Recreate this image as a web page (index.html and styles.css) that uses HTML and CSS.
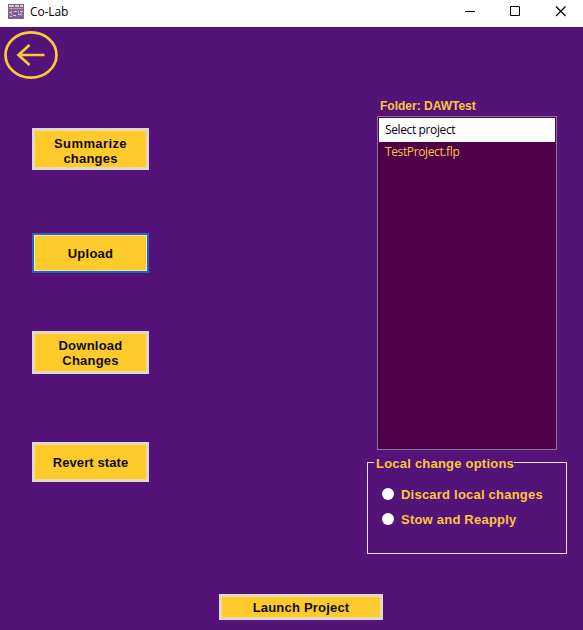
FILE: index.html
```html
<!DOCTYPE html>
<html lang="en">
<head>
<meta charset="utf-8">
<title>Co-Lab</title>
<link rel="stylesheet" href="styles.css">
</head>
<body>
<header class="titlebar">
  <svg class="app-icon" width="16" height="15" viewBox="0 0 16 15" shape-rendering="crispEdges">
    <path fill="#80639b" d="M0 0h16v15H0z"/>
    <path fill="#e6c9a8" d="M1 1h5v2H1zM7 1h4v2H7zM12 1h3v2h-3zM1 8h3v1H1zM6 7h3v1H6zM12 7h3v1h-3zM5 11h3v1H5zM10 10h3v1h-3zM2 12h2v1H2z"/>
    <path fill="#b79aac" d="M1 4h14v1H1zM3 6h1v5H3zM10 6h1v4h-1zM13 8h1v4h-1z"/>
    <path fill="#64468a" d="M1 6h1v1H1zM7 9h2v1H7zM12 13h2v1h-2z"/>
  </svg>
  <span class="app-name">Co-Lab</span>
  <svg class="controls" width="103" height="12" viewBox="0 0 103 12" fill="none" stroke="#000">
    <path d="M0 5.5h10M45.5.5h9v9h-9z"/>
    <path d="M91 .5l9.5 9.5M100.500 .5L91 10" stroke-width="1.2"/>
  </svg>
</header>
<main class="window">
  <section class="actions">
    <svg class="back" width="56" height="50" viewBox="0 0 56 50" fill="none" stroke="#fdca37">
      <ellipse cx="27" cy="25" rx="25.500" ry="22.700" stroke-width="2.700"/>
      <path d="M40.500 25H15M25.500 15L14.500 25l11 10" stroke-width="2.700"/>
    </svg>
    <button class="btn summarize"><span class="t-sum">Summarize</span><span class="t-chg">changes</span></button>
    <button class="btn upload"><span class="t-up">Upload</span></button>
    <button class="btn download"><span class="t-down">Download</span><span class="t-chg">Changes</span></button>
    <button class="btn revert"><span class="t-rev">Revert state</span></button>
  </section>
  <section class="projects">
    <div class="folder">Folder: DAWTest</div>
    <div class="list">
      <div class="item selected">Select project</div>
      <div class="item">TestProject.flp</div>
    </div>
    <fieldset class="options">
      <legend>Local change options</legend>
      <label class="option"><i class="radio"></i><span>Discard local changes</span></label>
      <label class="option"><i class="radio"></i><span>Stow and Reapply</span></label>
    </fieldset>
  </section>
  <footer class="footer"><button class="btn launch"><span class="t-launch">Launch Project</span></button></footer>
</main>
</body>
</html>
```
FILE: styles.css
```css
* { box-sizing: border-box; }
body { margin: 0; width: 583px; height: 630px; overflow: hidden; background: #541379; font: bold 13px/15px "Liberation Sans", Arial, sans-serif; }
.titlebar { display: flex; height: 27px; background: #fff; padding: 4px 16px 0 8px; }
.app-icon { flex: none; }
.app-name { margin: -1px 0 0 6px; font: 12px/18px "Open Sans", "Noto Sans", sans-serif; letter-spacing: -.1px; color: #000; }
.controls { flex: none; margin: 2px -1px 0 auto; }
.window { display: grid; grid-template-columns: 149px 200px; column-gap: 218px; grid-template-rows: 567px 36px; height: 603px; }
.actions { display: flex; flex-direction: column; }
.back { flex: none; margin: 3px 0 0 4px; }
.btn { display: flex; flex-direction: column; align-items: center; justify-content: center; flex: none; width: 117px; margin-left: 32px; padding: 0; border: 2px solid #dcd8d8; box-shadow: inset 0 0 0 1px #eeda9d; background: #ffcb2b; color: #100b05; font: inherit; white-space: nowrap; }
.summarize { height: 42px; margin-top: 48px; padding-top: 3px; }
.upload { height: 40px; margin-top: 63px; border-color: #2565b4; box-shadow: inset 0 0 0 1px #e5eac6; }
.download { height: 43px; margin-top: 58px; }
.revert { height: 40px; margin-top: 68px; }
.footer { grid-column: 1 / -1; }
.launch { width: 164px; height: 26px; margin-left: 219px; }
.t-sum { letter-spacing: .4px; }
.t-chg { letter-spacing: .2px; }
.t-up, .t-down { letter-spacing: .25px; }
.t-rev { letter-spacing: .1px; }
.t-launch { letter-spacing: .2px; }
.projects { color: #fdc73b; }
.folder { height: 17px; margin: 72px 0 0 13px; font-size: 12px; }
.list { width: 180px; height: 334px; margin-left: 10px; border: 1px solid #87768c; padding: 1px; background: #4e004b; }
.item { height: 20px; padding-left: 6px; font: 12px/20px "Open Sans", "Noto Sans", sans-serif; letter-spacing: -.38px; }
.selected { height: 24px; line-height: 24px; background: #fff; color: #000; }
.options { min-width: 0; height: 99px; margin: 5px 0 0; padding: 12px 0 0 13px; border: 1px solid #eadff0; letter-spacing: .22px; }
.options legend { margin-left: -7px; padding: 1px 0 0 2px; height: 15px; white-space: nowrap; }
.option { display: flex; align-items: center; height: 25px; white-space: nowrap; }
.radio { width: 12px; height: 12px; margin: -2px 7px 0 1px; border-radius: 50%; background: #fff; }
```
